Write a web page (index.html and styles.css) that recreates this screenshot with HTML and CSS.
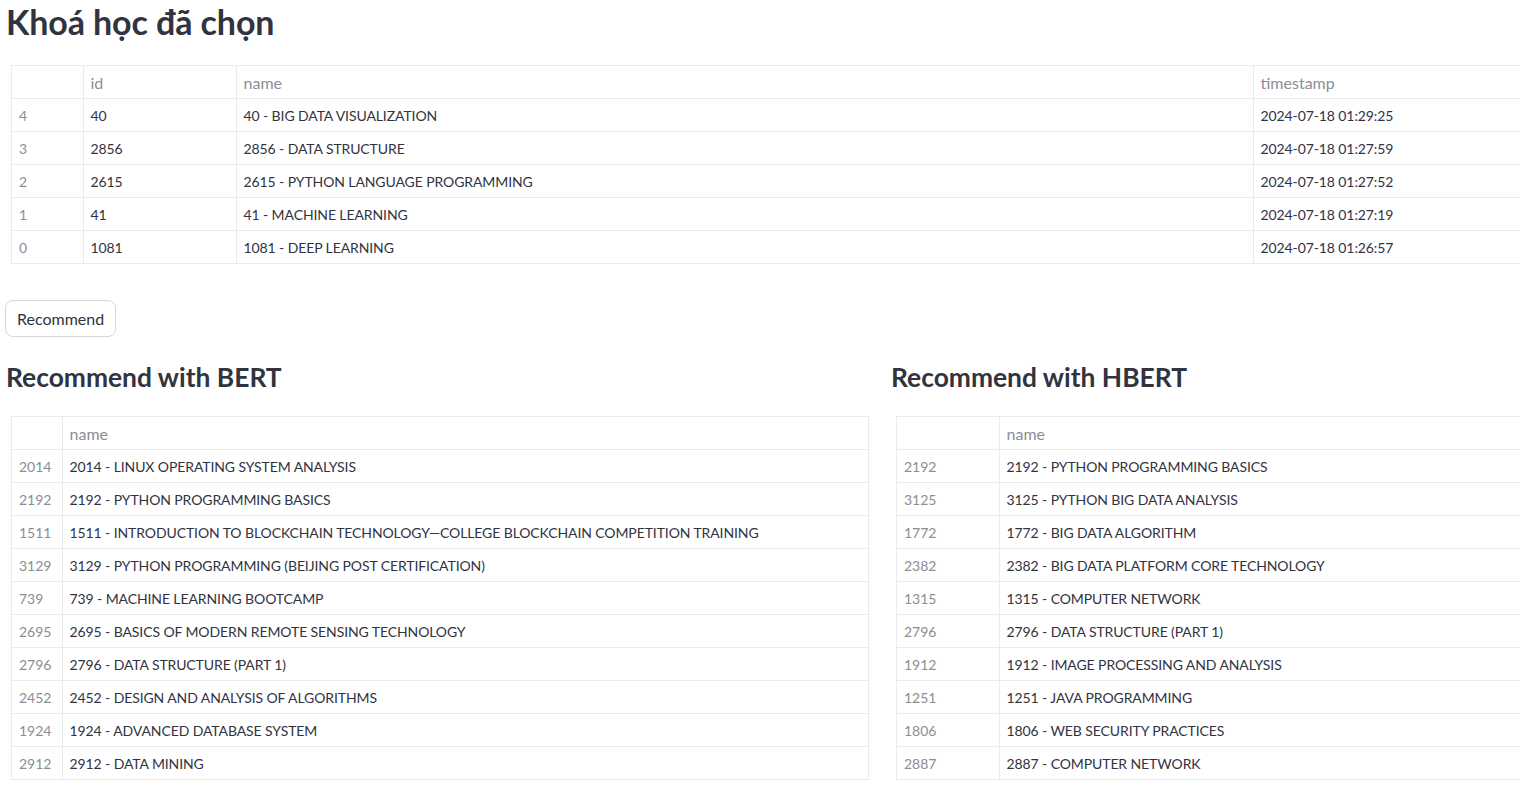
FILE: index.html
```html
<!DOCTYPE html>
<html lang="vi">
<head>
<meta charset="utf-8">
<title>Khoá học đã chọn</title>
<link rel="stylesheet" href="styles.css">
</head>
<body>
<main class="page">
  <h1 class="title">Khoá học đã chọn</h1>
  <div class="frame frame-wide">
    <table class="grid">
      <colgroup><col class="c-idx1"><col class="c-id"><col class="c-name1"><col class="c-ts"></colgroup>
      <thead><tr><th></th><th>id</th><th>name</th><th>timestamp</th></tr></thead>
      <tbody>
        <tr><td class="idx">4</td><td>40</td><td>40 - BIG DATA VISUALIZATION</td><td>2024-07-18 01:29:25</td></tr>
        <tr><td class="idx">3</td><td>2856</td><td>2856 - DATA STRUCTURE</td><td>2024-07-18 01:27:59</td></tr>
        <tr><td class="idx">2</td><td>2615</td><td>2615 - PYTHON LANGUAGE PROGRAMMING</td><td>2024-07-18 01:27:52</td></tr>
        <tr><td class="idx">1</td><td>41</td><td>41 - MACHINE LEARNING</td><td>2024-07-18 01:27:19</td></tr>
        <tr><td class="idx">0</td><td>1081</td><td>1081 - DEEP LEARNING</td><td>2024-07-18 01:26:57</td></tr>
      </tbody>
    </table>
  </div>

  <button class="btn" type="button">Recommend</button>

  <div class="columns">
    <section class="col">
      <h2 class="subtitle">Recommend with BERT</h2>
      <div class="frame frame-col">
        <table class="grid">
          <colgroup><col class="c-idx2"><col></colgroup>
          <thead><tr><th></th><th>name</th></tr></thead>
          <tbody>
            <tr><td class="idx">2014</td><td>2014 - LINUX OPERATING SYSTEM ANALYSIS</td></tr>
            <tr><td class="idx">2192</td><td>2192 - PYTHON PROGRAMMING BASICS</td></tr>
            <tr><td class="idx">1511</td><td>1511 - INTRODUCTION TO BLOCKCHAIN TECHNOLOGY—COLLEGE BLOCKCHAIN COMPETITION TRAINING</td></tr>
            <tr><td class="idx">3129</td><td>3129 - PYTHON PROGRAMMING (BEIJING POST CERTIFICATION)</td></tr>
            <tr><td class="idx">739</td><td>739 - MACHINE LEARNING BOOTCAMP</td></tr>
            <tr><td class="idx">2695</td><td>2695 - BASICS OF MODERN REMOTE SENSING TECHNOLOGY</td></tr>
            <tr><td class="idx">2796</td><td>2796 - DATA STRUCTURE (PART 1)</td></tr>
            <tr><td class="idx">2452</td><td>2452 - DESIGN AND ANALYSIS OF ALGORITHMS</td></tr>
            <tr><td class="idx">1924</td><td>1924 - ADVANCED DATABASE SYSTEM</td></tr>
            <tr><td class="idx">2912</td><td>2912 - DATA MINING</td></tr>
          </tbody>
        </table>
      </div>
    </section>
    <section class="col">
      <h2 class="subtitle">Recommend with HBERT</h2>
      <div class="frame frame-col">
        <table class="grid">
          <colgroup><col class="c-idx3"><col></colgroup>
          <thead><tr><th></th><th>name</th></tr></thead>
          <tbody>
            <tr><td class="idx">2192</td><td>2192 - PYTHON PROGRAMMING BASICS</td></tr>
            <tr><td class="idx">3125</td><td>3125 - PYTHON BIG DATA ANALYSIS</td></tr>
            <tr><td class="idx">1772</td><td>1772 - BIG DATA ALGORITHM</td></tr>
            <tr><td class="idx">2382</td><td>2382 - BIG DATA PLATFORM CORE TECHNOLOGY</td></tr>
            <tr><td class="idx">1315</td><td>1315 - COMPUTER NETWORK</td></tr>
            <tr><td class="idx">2796</td><td>2796 - DATA STRUCTURE (PART 1)</td></tr>
            <tr><td class="idx">1912</td><td>1912 - IMAGE PROCESSING AND ANALYSIS</td></tr>
            <tr><td class="idx">1251</td><td>1251 - JAVA PROGRAMMING</td></tr>
            <tr><td class="idx">1806</td><td>1806 - WEB SECURITY PRACTICES</td></tr>
            <tr><td class="idx">2887</td><td>2887 - COMPUTER NETWORK</td></tr>
          </tbody>
        </table>
      </div>
    </section>
  </div>
</main>
</body>
</html>
```

FILE: styles.css
```css
html, body {
  margin: 0;
  padding: 0;
  background: #ffffff;
  overflow: hidden;
}
body {
  font-family: "Lato", "Liberation Sans", sans-serif;
  color: #31333f;
}
.page {
  width: 1754px;
  padding: 0 0 0 6px;
}
.title {
  margin: 0;
  padding: 2px 0 0 0;
  font-size: 34px;
  font-weight: 700;
  line-height: 40px;
  color: #31333f;
  letter-spacing: -0.1px;
}
.frame {
  margin-left: 5px;
  border: 1px solid #ebebee;
  border-right: none;
}
.frame-wide {
  margin-top: 23px;
  width: 1750px;
}
.frame-col {
  width: 856px;
  border-right: 1px solid #ebebee;
}
.grid {
  border-collapse: collapse;
  table-layout: fixed;
  width: 100%;
  font-size: 14px;
}
.grid th, .grid td {
  height: 32px;
  padding: 0 7px;
  text-align: left;
  border-top: 1px solid #ebebee;
  border-left: 1px solid #ebebee;
  white-space: nowrap;
  overflow: hidden;
  font-weight: 400;
  color: #31333f;
  letter-spacing: -0.1px;
}
.grid thead th {
  border-top: none;
  color: #8c8d95;
  font-size: 16px;
  letter-spacing: 0;
}
.grid tr > :first-child {
  border-left: none;
}
.grid td.idx {
  color: #8c8d95;
  letter-spacing: 0;
}
.c-idx1 { width: 71px; }
.c-id { width: 153px; }
.c-name1 { width: 1017px; }
.c-idx2 { width: 50px; }
.c-idx3 { width: 102px; }
.btn {
  display: block;
  margin-top: 36px;
  margin-left: -1px;
  height: 37px;
  padding: 0 11px 1px;
  font-family: inherit;
  font-size: 16px;
  color: #31333f;
  background: #ffffff;
  border: 1px solid #d6d6db;
  border-radius: 8px;
}
.columns {
  display: flex;
  gap: 16px;
  margin-top: 24px;
}
.col {
  width: 869px;
  flex: none;
}
.subtitle {
  margin: 0;
  font-size: 26.4px;
  font-weight: 700;
  line-height: 32px;
  padding-bottom: 2px;
  color: #31333f;
}
.col .frame {
  margin-top: 21px;
}
```
